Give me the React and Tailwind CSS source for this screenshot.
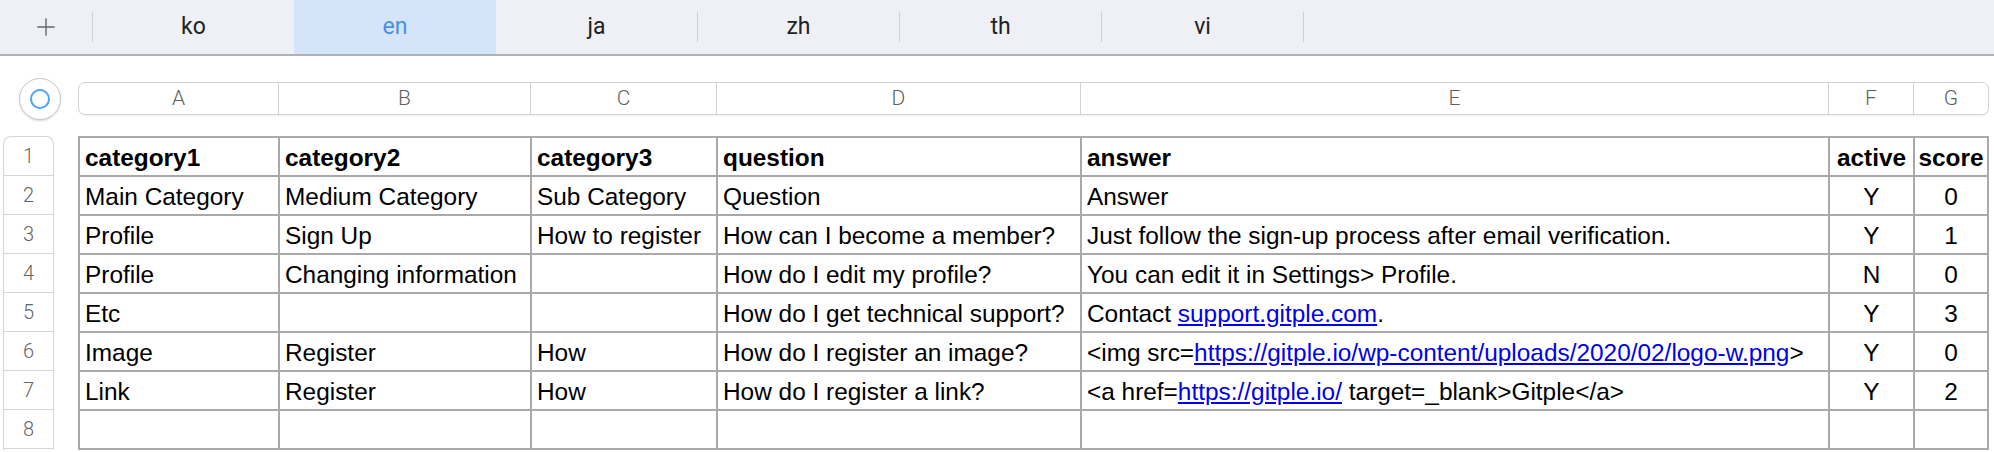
import { Plus } from 'lucide-react';

const tabs = ['ko', 'en', 'ja', 'zh', 'th', 'vi'];
const active = 'en';

const cols = [
  { key: 'A', w: 'w-[200px]', head: 'w-[200px]' },
  { key: 'B', w: 'w-[252px]', head: 'w-[252px]' },
  { key: 'C', w: 'w-[186px]', head: 'w-[186px]' },
  { key: 'D', w: 'w-[364px]', head: 'w-[364px]' },
  { key: 'E', w: 'w-[748px]', head: 'w-[748px]' },
  { key: 'F', w: 'w-[85px]', head: 'w-[85px]' },
  { key: 'G', w: 'w-[74px]', head: 'w-[74px]' },
];

const Link = ({ children }) => <span className="text-[#0000ee] underline">{children}</span>;

const rows = [
  ['category1', 'category2', 'category3', 'question', 'answer', 'active', 'score'],
  ['Main Category', 'Medium Category', 'Sub Category', 'Question', 'Answer', 'Y', '0'],
  ['Profile', 'Sign Up', 'How to register', 'How can I become a member?', 'Just follow the sign-up process after email verification.', 'Y', '1'],
  ['Profile', 'Changing information', '', 'How do I edit my profile?', 'You can edit it in Settings> Profile.', 'N', '0'],
  ['Etc', '', '', 'How do I get technical support?', <>Contact <Link>support.gitple.com</Link>.</>, 'Y', '3'],
  ['Image', 'Register', 'How', 'How do I register an image?', <>{'<img src='}<Link>https://gitple.io/wp-content/uploads/2020/02/logo-w.png</Link>{'>'}</>, 'Y', '0'],
  ['Link', 'Register', 'How', 'How do I register a link?', <>{'<a href='}<Link>https://gitple.io/</Link>{' target=_blank>Gitple</a>'}</>, 'Y', '2'],
  ['', '', '', '', '', '', ''],
];

export default function App() {
  return (
    <div className="w-[1994px] h-[452px] bg-white overflow-hidden font-['Liberation_Sans',Arial,sans-serif]">
      {/* sheet tabs */}
      <div className="h-[56px] bg-[#eff0f5] border-b-2 border-[#aeb2bb] flex items-center font-['Roboto','Liberation_Sans',sans-serif]">
        <div className="w-[92px] h-full flex items-center justify-center text-[#666]">
          <Plus className="w-[28px] h-[28px]" strokeWidth={1.2} />
        </div>
        {tabs.map((t, i) => {
          const isActive = t === active;
          const nextActive = tabs[i + 1] === active;
          return (
            <div key={t} className="flex items-center h-full">
              {!isActive && i === 0 && <div className="w-px h-[30px] bg-[#cfd0d4]" />}
              <div
                className={
                  isActive
                    ? 'w-[202px] h-full flex items-center justify-center bg-[#d5e4f8] text-[#4a90e2] text-[23px]'
                    : 'w-[201px] h-full flex items-center justify-center text-[#222] text-[23px]'
                }
              >
                {t}
              </div>
              {!isActive && !nextActive && <div className="w-px h-[30px] bg-[#cfd0d4]" />}
            </div>
          );
        })}
      </div>

      {/* column letters */}
      <div className="mt-[26px] flex items-center h-[33px]">
        <div className="w-[78px] flex items-center">
          <div className="ml-[19px] w-[42px] h-[42px] rounded-full border border-[#c9c9c9] shadow-[0_1px_2px_rgba(0,0,0,0.15)] flex items-center justify-center bg-white">
            <div className="w-[20px] h-[20px] rounded-full border-2 border-[#4aa3f5]" />
          </div>
        </div>
        <div className="flex h-[33px] border border-[#d2d2d2] rounded-[7px] shadow-[0_1px_1px_rgba(0,0,0,0.06)] font-['Roboto','Liberation_Sans',sans-serif] text-[21px] font-light text-[#5f5f5f]">
          {cols.map((c, i) => (
            <div
              key={c.key}
              className={`${c.head} flex items-center justify-center ${i < cols.length - 1 ? 'border-r border-[#d2d2d2]' : ''}`}
            >
              {c.key}
            </div>
          ))}
        </div>
      </div>

      {/* grid */}
      <div className="mt-[21px] flex">
        <div className="ml-[3px] w-[51px] border-l border-r border-t border-[#d6d6d6] rounded-t-[8px] font-['Roboto','Liberation_Sans',sans-serif] text-[20px] font-light text-[#666]">
          {rows.map((_, i) => (
            <div key={i} className="h-[39px] flex items-center justify-center border-b border-[#d6d6d6]">
              {i + 1}
            </div>
          ))}
        </div>
        <div className="ml-[24px] border-l-2 border-t-2 border-[#a9a9a9] text-[24.4px] text-black">
          {rows.map((r, ri) => (
            <div key={ri} className={`flex h-[39px] ${ri === 0 ? 'font-bold' : ''}`}>
              {r.map((cell, ci) => (
                <div
                  key={ci}
                  className={`${cols[ci].w} shrink-0 border-r-2 border-b-2 border-[#a9a9a9] flex items-center whitespace-pre overflow-hidden px-[5px] pt-[3px] ${ci >= 5 ? 'justify-center' : ''}`}
                >
                  <span>{cell}</span>
                </div>
              ))}
            </div>
          ))}
        </div>
      </div>
    </div>
  );
}
